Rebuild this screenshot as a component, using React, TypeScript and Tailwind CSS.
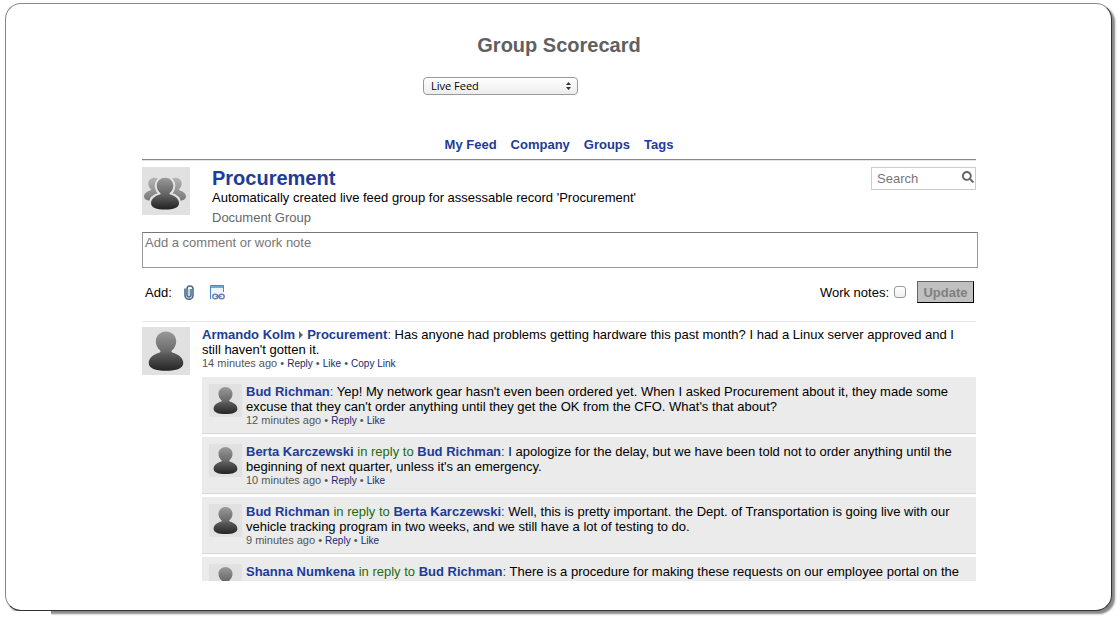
import React from "react";
import { FaSearch } from "react-icons/fa";

type Reply = { author: string; replyTo?: string; text: string; ago?: string };

const replies: Reply[] = [
  {
    author: "Bud Richman",
    text: "Yep! My network gear hasn't even been ordered yet. When I asked Procurement about it, they made some excuse that they can't order anything until they get the OK from the CFO. What's that about?",
    ago: "12 minutes ago",
  },
  {
    author: "Berta Karczewski",
    replyTo: "Bud Richman",
    text: "I apologize for the delay, but we have been told not to order anything until the beginning of next quarter, unless it's an emergency.",
    ago: "10 minutes ago",
  },
  {
    author: "Bud Richman",
    replyTo: "Berta Karczewski",
    text: "Well, this is pretty important. the Dept. of Transportation is going live with our vehicle tracking program in two weeks, and we still have a lot of testing to do.",
    ago: "9 minutes ago",
  },
  {
    author: "Shanna Numkena",
    replyTo: "Bud Richman",
    text: "There is a procedure for making these requests on our employee portal on the",
  },
];

const personPath =
  "M24 4.5c5.800 0 10.200 4.300 10.200 9.800 0 4-1.800 7.200-4.400 9.200-.6.500-.4 1.600.5 1.900 6.200 1.700 11 5.600 11 10.600 0 5.400-6.800 7.800-17.300 7.800S6.700 41.400 6.700 36c0-5 4.800-8.900 11-10.600.9-.3 1.100-1.400.5-1.900-2.600-2-4.400-5.200-4.400-9.200C13.800 8.800 18.200 4.500 24 4.500z";

function PersonAvatar({ className }: { className: string }) {
  const id = React.useId();
  return (
    <svg viewBox="0 0 48 48" className={className} aria-hidden="true">
      <defs>
        <linearGradient id={id} x1="0" y1="0" x2="0" y2="1">
          <stop offset="0" stopColor="#9a9a9a" />
          <stop offset="0.5" stopColor="#6a6a6a" />
          <stop offset="0.6" stopColor="#575757" />
          <stop offset="1" stopColor="#242424" />
        </linearGradient>
      </defs>
      <rect width="48" height="48" fill="#e1e1e1" />
      <path d={personPath} fill={`url(#${id})`} />
    </svg>
  );
}

function GroupAvatar({ className }: { className: string }) {
  return (
    <svg viewBox="0 0 48 48" className={className} aria-hidden="true">
      <defs>
        <linearGradient id="group-back" x1="0" y1="0" x2="0" y2="1">
          <stop offset="0" stopColor="#b6b6b6" />
          <stop offset="1" stopColor="#777777" />
        </linearGradient>
        <linearGradient id="group-front" x1="0" y1="0" x2="0" y2="1">
          <stop offset="0" stopColor="#9a9a9a" />
          <stop offset="0.55" stopColor="#606060" />
          <stop offset="1" stopColor="#202020" />
        </linearGradient>
      </defs>
      <rect width="48" height="48" fill="#e1e1e1" />
      <g fill="url(#group-back)">
        <path transform="translate(-2 8) scale(0.6)" d={personPath} />
        <path transform="translate(19.200 8) scale(0.6)" d={personPath} />
      </g>
      <path
        transform="translate(3.600 7) scale(0.81)"
        d={personPath}
        fill="url(#group-front)"
        stroke="#e1e1e1"
        strokeWidth="5"
        paintOrder="stroke"
      />
    </svg>
  );
}

function ClipIcon() {
  return (
    <svg viewBox="0 0 10 15" className="h-[15px] w-[10px]" fill="none" aria-hidden="true">
      <path d="M1 3.500v7a4 3.800 0 0 0 8 0V4a3 3 0 0 0-6 0v6a2 2 0 0 0 4 0V4" stroke="#4a6a8c" strokeWidth="1.600" />
      <path d="M5 4v7" stroke="#a9c4dc" strokeWidth="1.400" />
    </svg>
  );
}

function LinkIcon() {
  return (
    <svg viewBox="0 0 15 15" className="h-[15px] w-[15px]" fill="none" aria-hidden="true">
      <rect x="0.500" y="0.500" width="13" height="13" fill="#eef4fb" />
      <path d="M0.500 14V0.500h13V7" stroke="#4b86c4" />
      <path d="M1 2h12" stroke="#6ea7e2" strokeWidth="2" />
      <rect x="1.500" y="8" width="13.500" height="7" fill="#fff" />
      <path d="M0.500 3v11" stroke="#4b86c4" />
      <rect x="2.700" y="9.200" width="5.200" height="4.600" rx="2.300" stroke="#6f7fb8" strokeWidth="1.500" />
      <rect x="9" y="9.200" width="5.200" height="4.600" rx="2.300" stroke="#6f7fb8" strokeWidth="1.500" />
      <path d="M5.500 11.500h6" stroke="#6f7fb8" strokeWidth="1.400" />
    </svg>
  );
}

function Name({ children }: { children: React.ReactNode }) {
  return (
    <a href="#" className="font-bold text-[#203c98]">
      {children}
    </a>
  );
}

function Meta({ ago, actions }: { ago: string; actions: string[] }) {
  return (
    <p className="text-[11px] leading-[13px] text-[#555]">
      {ago}
      {actions.map((action) => (
        <React.Fragment key={action}>
          {" • "}
          <a href="#" className="text-[10px] text-[#142a70]">
            {action}
          </a>
        </React.Fragment>
      ))}
    </p>
  );
}

export default function App() {
  return (
    <div className="bg-white pt-[3px] pr-2 pb-2 pl-[5px] font-['Liberation_Sans',Arial,sans-serif] text-[13px] leading-[15px] text-black">
      <main className="relative rounded-[16px] border border-t-[#888] border-r-[#333] border-b-[#333] border-l-[#888] bg-white pt-[29px] pr-[23px] pb-[29px] pl-6 shadow-[3px_3px_2px_#888]">
        <span className="absolute top-full -left-[6px] mt-px h-[7px] w-[51px] bg-white" aria-hidden="true" />
        <div className="mx-auto max-w-[834px]">
          <h1 className="text-center text-xl leading-6 font-bold text-[#606060]">Group Scorecard</h1>

          <div className="mt-5 flex justify-center pr-[117px]">
            <div className="relative">
              <select
                aria-label="Scorecard view"
                className="block h-[18px] w-[155px] appearance-none rounded-[4px] border border-[#999] bg-linear-to-b from-white to-[#ececec] pl-[7px] font-['Open_Sans','Noto_Sans',sans-serif] text-[11px] leading-4"
              >
                <option>Live Feed</option>
              </select>
              <svg viewBox="0 0 5 8" className="pointer-events-none absolute top-[5px] right-[7px] h-2 w-[5px]" aria-hidden="true">
                <path d="M2.500 0L5 3H0zM2.500 8L0 5h5z" fill="#333" />
              </svg>
            </div>
          </div>

          <nav className="mt-[42px] flex justify-center gap-[14px] font-bold text-[#203c98]">
            <a href="#">My Feed</a>
            <a href="#">Company</a>
            <a href="#">Groups</a>
            <a href="#">Tags</a>
          </nav>

          <header className="mt-[7px] flex items-start border-t border-[#888] pt-[7px] inset-shadow-[0_1px_0_#e4e4e4]">
            <GroupAvatar className="size-12 shrink-0" />
            <div className="ml-[22px] flex-1">
              <h2 className="text-xl leading-[23px] font-bold text-[#203c98]">
                <a href="#">Procurement</a>
              </h2>
              <p>Automatically created live feed group for assessable record 'Procurement'</p>
              <p className="mt-[5px] text-[#666]">Document Group</p>
            </div>
            <div className="flex h-[23px] w-[105px] items-center border border-[#ccc] pr-px pl-[5px]">
              <input
                type="text"
                aria-label="Search"
                placeholder="Search"
                className="w-full min-w-0 flex-1 outline-none placeholder:text-[#777]"
              />
              <button type="button" aria-label="Run search" className="mb-[3px] text-[#666]">
                <FaSearch className="size-3" />
              </button>
            </div>
          </header>

          <form onSubmit={(e) => e.preventDefault()}>
            <textarea
              aria-label="Add a comment or work note"
              placeholder="Add a comment or work note"
              className="mt-[7px] -mr-[2px] block h-9 w-[calc(100%+2px)] resize-none border border-[#999] border-t-[#777] px-[2px] py-[2px] leading-[15px] outline-none placeholder:text-[#777]"
            />
            <div className="mt-[13px] flex h-[22px] items-center pr-[2px] pl-[3px]">
              <span>Add:</span>
              <button type="button" aria-label="Attach a file" className="ml-3">
                <ClipIcon />
              </button>
              <button type="button" aria-label="Add a link" className="ml-4">
                <LinkIcon />
              </button>
              <label htmlFor="work-notes" className="ml-auto">
                Work notes:
              </label>
              <input
                id="work-notes"
                type="checkbox"
                className="ml-[5px] size-3 appearance-none rounded-[3px] border border-[#999] bg-linear-to-b from-white to-[#eee]"
              />
              <button
                type="button"
                className="ml-[11px] h-[22px] w-[57px] border border-t-[#666] border-r-black border-b-black border-l-[#666] bg-[#c0c0c0] font-bold text-[#808080]"
              >
                Update
              </button>
            </div>
          </form>

          <section className="mt-[18px] h-[260px] overflow-hidden border-t border-[#e8e8e8] pt-[5px]">
            <article className="flex items-start">
              <PersonAvatar className="size-12 shrink-0" />
              <div className="ml-3 min-w-0 flex-1">
                <p>
                  <Name>Armando Kolm</Name>
                  <svg viewBox="0 0 4 8" className="mx-1 inline-block h-2 w-1 align-baseline" aria-hidden="true">
                    <path d="M0 0l4 4-4 4z" fill="#666" />
                  </svg>
                  <Name>Procurement</Name>
                  <span className="text-[#203c98]">:</span> Has anyone had problems getting hardware this past month? I had a Linux
                  server approved and I still haven't gotten it.
                </p>
                <Meta ago="14 minutes ago" actions={["Reply", "Like", "Copy Link"]} />
                <ul className="mt-[7px] flex flex-col gap-[3px]">
                  {replies.map((reply) => (
                    <li
                      key={reply.text}
                      className="flex items-start border-b border-[#d8d8d8] bg-[#ebebeb] pt-[7px] pr-3 pb-[6px] pl-[7px]"
                    >
                      <PersonAvatar className="size-[33px] shrink-0" />
                      <div className="ml-1 min-w-0 flex-1">
                        <p>
                          <Name>{reply.author}</Name>
                          {reply.replyTo && (
                            <>
                              <span className="text-[#1c6b0c]"> in reply to </span>
                              <Name>{reply.replyTo}</Name>
                            </>
                          )}
                          <span className="text-[#203c98]">:</span> {reply.text}
                        </p>
                        {reply.ago && <Meta ago={reply.ago} actions={["Reply", "Like"]} />}
                      </div>
                    </li>
                  ))}
                </ul>
              </div>
            </article>
          </section>
        </div>
      </main>
    </div>
  );
}
